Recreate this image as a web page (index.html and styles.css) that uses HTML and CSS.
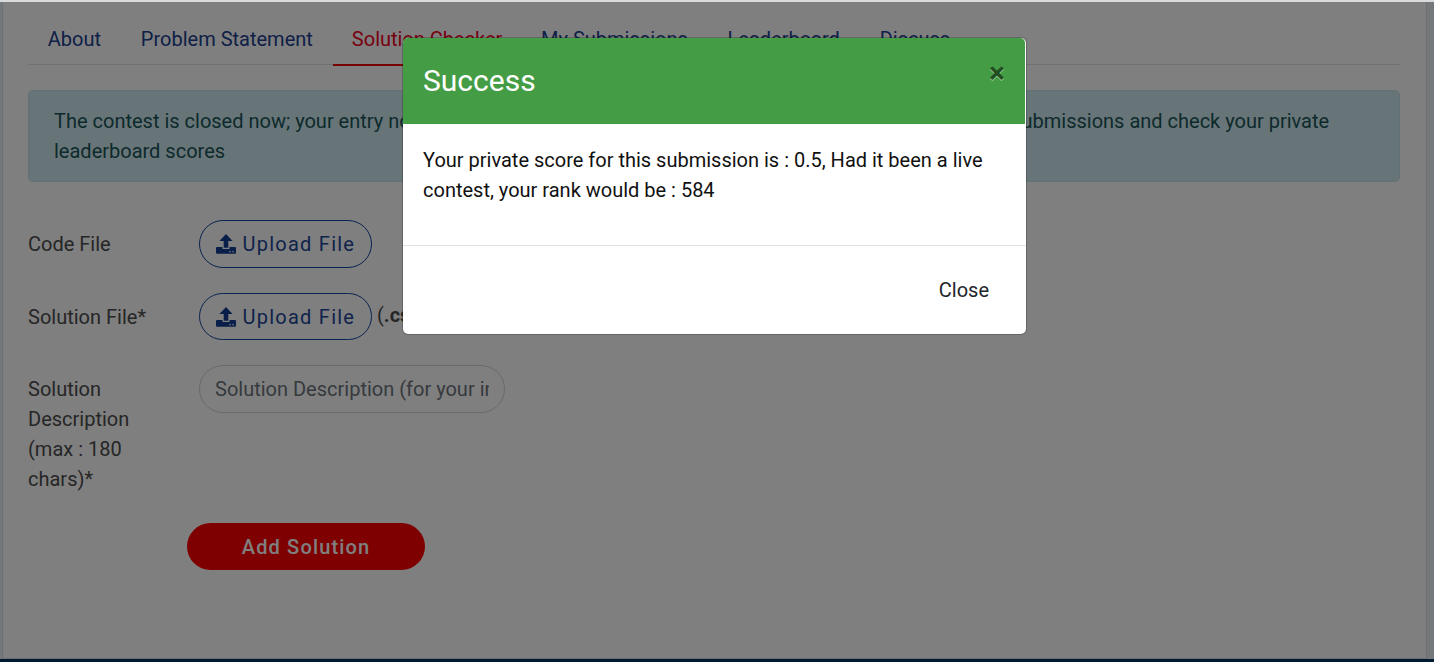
FILE: index.html
```html
<!DOCTYPE html>
<html lang="en">
<head>
<meta charset="utf-8">
<title>Solution Checker</title>
<link rel="stylesheet" href="styles.css">
</head>
<body>
<svg class="sprite" aria-hidden="true">
  <symbol id="upload" viewBox="0 0 20 20">
    <path d="M10 0 16.6 7H12.3V13.7H7.7V7H3.4Z"/>
    <path fill-rule="evenodd" d="M1 13.1H6.5V14.9H13.5V13.1H19Q20 13.1 20 14.1V18.8Q20 19.8 19 19.8H1Q0 19.8 0 18.8V14.1Q0 13.1 1 13.1ZM13.2 17V18.2H14.6V17ZM16.4 17V18.2H17.8V17Z"/>
  </symbol>
</svg>
<div class="page">
  <main class="card">
    <nav class="tabs">
      <a class="tab">About</a>
      <a class="tab">Problem Statement</a>
      <a class="tab active">Solution Checker</a>
      <a class="tab">My Submissions</a>
      <a class="tab">Leaderboard</a>
      <a class="tab">Discuss</a>
    </nav>
    <div class="alert">The contest is closed now; your entry <span class="notice">not be considered for ranking. You can still make more</span> submissions and check your private leaderboard scores</div>
    <form class="form">
      <div class="row">
        <label class="label">Code File</label>
        <button type="button" class="upload"><svg class="icon"><use href="#upload"/></svg>Upload File</button>
      </div>
      <div class="row">
        <label class="label wide">Solution File*</label>
        <button type="button" class="upload short"><svg class="icon"><use href="#upload"/></svg>Upload File</button>
        <span class="hint">(<b>.csv</b>)</span>
      </div>
      <div class="row">
        <label class="label">Solution Description (max : 180 chars)*</label>
        <input class="input" placeholder="Solution Description (for your internal use)">
      </div>
      <button type="button" class="submit">Add Solution</button>
    </form>
  </main>
  <footer class="footer"></footer>
</div>
<div class="backdrop">
  <section class="modal">
    <header class="modal-header"><h1 class="title">Success</h1><button type="button" class="dismiss">×</button></header>
    <div class="modal-body">Your private score for this submission is : 0.5, Had it been a live contest, your rank would be : 584</div>
    <footer class="modal-footer"><button type="button" class="close">Close</button></footer>
  </section>
</div>
</body>
</html>
```
FILE: styles.css
```css
* { box-sizing: border-box; }
body {
  margin: 0;
  height: 662px;
  overflow: hidden;
  background: #ebf0f6;
  color: #4c4c4c;
  font: 20px/30px Roboto, sans-serif;
}
button, input { font: inherit; }
.sprite { display: none; }
.page { display: flex; flex-direction: column; height: 662px; border-top: 2px solid #d9dadb; }
.card {
  flex: 1;
  margin: 0 7px 0 2px;
  padding: 12px 26px 0 25px;
  background: #fff;
  border: solid #d8dee6;
  border-width: 0 1px 1px;
}
.footer { height: 3px; background: #003060; }
.tabs { display: flex; height: 51px; border-bottom: 1px solid #dee2e6; }
.tab { height: 52px; padding: 10px 20px 0 19.8px; color: #20408e; }
.tab.active { color: #f00020; padding: 10px 19px 0; border-bottom: 2px solid #f00000; }
.alert {
  height: 92px;
  margin-top: 25px;
  padding: 15px 25px;
  border: 1px solid #bee5eb;
  border-radius: 5px;
  background: #d0eaf0;
  color: #1a5558;
}
.notice { display: inline-block; width: 618px; height: 30px; overflow: hidden; vertical-align: top; white-space: nowrap; }
.form { padding-top: 38px; }
.row { display: flex; margin-bottom: 25px; }
.label { width: 171px; padding: 9px 40px 0 0; }
.label.wide { padding-right: 0; }
.upload {
  display: flex;
  align-items: center;
  width: 173px;
  height: 48px;
  padding: 0 15px 0 15.5px;
  border: 1px solid #1746a0;
  border-radius: 24px;
  background: transparent;
  color: #1d4697;
  letter-spacing: 1.25px;
  white-space: nowrap;
}
.short { height: 47px; }
.icon { width: 20px; height: 20px; margin-right: 7px; fill: #123f94; flex: none; }
.hint { padding: 7px 0 0 5px; }
.input {
  width: 306px;
  height: 48px;
  padding: 0 15px;
  border: 1px solid #ced4da;
  border-radius: 24px;
  background: transparent;
}
.input::placeholder { color: #6c757d; opacity: 1; }
.submit {
  display: block;
  width: 238px;
  height: 47px;
  margin: 29px 0 0 159px;
  padding: 0;
  border: 0;
  border-radius: 24px;
  background: #f00;
  color: #fff;
  font-weight: 500;
  letter-spacing: 1.15px;
}
.backdrop {
  position: absolute;
  inset: 2px 0 0;
  padding: 35px 0 0 402px;
  background: rgba(0, 0, 0, .5);
}
.modal {
  width: 625px;
  height: 298px;
  border: 1px solid rgba(0, 0, 0, .2);
  border-radius: 6px;
  background: #fff;
  background-clip: padding-box;
  color: #111;
}
.modal-header {
  display: flex;
  justify-content: space-between;
  width: 622px;
  height: 86px;
  padding: 20px 19px 20px 20px;
  border-radius: 5px 5px 0 0;
  background: #449d44;
}
.title { margin: 0; color: #fff; font-size: 30px; font-weight: 400; line-height: 45px; }
.dismiss {
  width: 18px;
  height: 30px;
  padding: 0;
  border: 0;
  background: none;
  color: #000;
  font-size: 30px;
  font-weight: 700;
  line-height: 30px;
  text-shadow: 0 1px 0 #fff;
  opacity: .5;
}
.modal-body { height: 121px; padding: 21px 20px; }
.modal-footer { display: flex; justify-content: flex-end; height: 89px; padding: 20px; border-top: 1px solid #dee2e6; }
.close { height: 48px; padding: 0 17px; border: 0; background: none; color: #212529; }
```
